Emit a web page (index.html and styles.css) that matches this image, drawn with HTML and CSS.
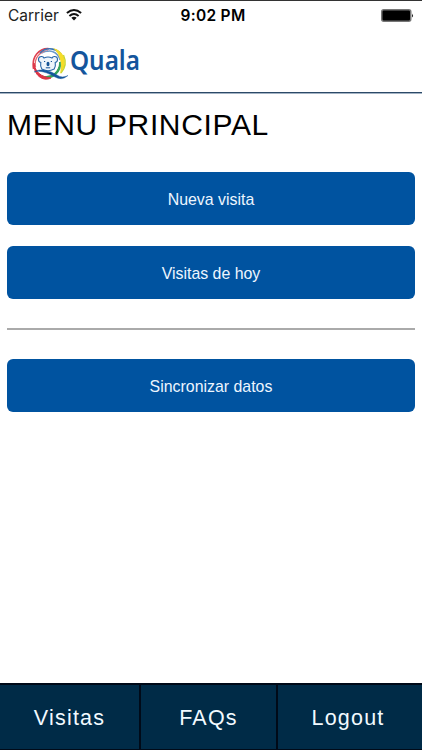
FILE: index.html
```html
<!DOCTYPE html>
<html lang="es">
<head>
<meta charset="utf-8">
<title>Quala</title>
<link rel="stylesheet" href="styles.css">
</head>
<body>
<div class="status">
  <div class="carrier"><span>Carrier</span>
    <svg width="16" height="12" viewBox="0 0 16 12" fill="none" stroke="#111" stroke-width="2"><path d="M.9 4.1Q8-2 15.1 4.1M3.4 6.9Q8 3 12.6 6.9"/><path d="M5.3 8.8Q8 6.6 10.7 8.8L8 11.6Z" fill="#111" stroke="none"/></svg>
  </div>
  <span class="time">9:02 PM</span>
  <svg class="battery" width="33" height="13" viewBox="0 0 33 13"><rect x=".75" y=".75" width="29" height="11.5" rx="2" fill="#000" stroke="#777" stroke-width="1.5"/><path d="M31 4.5q1.8 2 0 4z" fill="#111"/></svg>
</div>
<header class="header">
  <svg class="mark" width="38" height="34" viewBox="0 0 38 34" fill="none">
    <path d="M1.6 22C-.8 10 7 1 17 1.7" stroke="#df4050" stroke-width="1.6"/>
    <path d="M3.5 20C1.8 11 8 4 16 4" stroke="#e36a70" stroke-width="1.3"/>
    <path d="M8 6C15-1 27 1 31 11" stroke="#3975b5" stroke-width="1.6"/>
    <path d="M10 7C17 1 26 5 28 13" stroke="#6d9aca" stroke-width="1.4"/>
    <path d="M21 1C33 4 37 17 28 27C30 17 29 8 21 1Z" fill="#f6dc28"/>
    <path d="M31.5 8Q36 18 29 26" stroke="#c9d52e" stroke-width="1.3"/>
    <path d="M27.5 15C29 25 20 33 9 29.5" stroke="#35a35b" stroke-width="2.6"/>
    <path d="M2 16C3 25 9 30 19 31C11 35 1 28 2 16Z" fill="#dd3345" stroke="#dd3345"/>
    <circle cx="16" cy="16" r="11" fill="#fff"/>
    <path d="M9.8 22C8 19 8.5 17 8.8 15.5C5.3 14.7 5.8 8.8 10 9.5Q11.4 9.7 12 11Q16 9 20 11Q20.6 9.7 22 9.5C26.2 8.8 26.7 14.7 23.2 15.5C23.5 17 24 19 22.2 22Q16 25.5 9.8 22Z" fill="#edf4fb" stroke="#2866a8" stroke-width="1.1"/>
    <ellipse cx="16" cy="17" rx="1.5" ry="2.2" fill="#145396"/>
    <path d="M12 14.5h1.2M18.8 14.5h1.2M13.8 20.8h4.4" stroke="#145396" stroke-width="1"/>
    <path d="M2 25C9 20.5 19 24 25 28Q30 31.5 36 28.5Q30 34 23 30C15 25.5 8 23 2 25Z" fill="#14559c" stroke="#14559c" stroke-width=".4"/>
  </svg>
  <span class="brand">Quala</span>
</header>
<main class="main">
  <h1><span>MENU PRINCIPAL</span></h1>
  <button class="btn">Nueva visita</button>
  <button class="btn">Visitas de hoy</button>
  <hr>
  <button class="btn">Sincronizar datos</button>
</main>
<nav class="nav"><a>Visitas</a><a>FAQs</a><a>Logout</a></nav>
</body>
</html>
```
FILE: styles.css
```css
* { box-sizing: border-box; }
body {
  margin: 0;
  height: 750px;
  overflow: hidden;
  display: flex;
  flex-direction: column;
  background: #fff;
  color: #000;
  font-family: "Liberation Sans", Arial, sans-serif;
}
.status {
  height: 30px;
  border-top: 1px solid #333;
  padding: 0 8px;
  display: grid;
  grid-template-columns: 1fr auto 1fr;
  align-items: center;
  font-family: Inter, sans-serif;
  font-size: 15.5px;
  line-height: 28px;
}
.carrier { display: flex; align-items: center; gap: 7px; color: #222; }
.carrier svg { margin-top: -2px; }
.time { font-weight: 600; font-size: 15.5px; letter-spacing: .3px; padding-left: 4px; }
.battery { justify-self: end; margin-top: -1px; }
.header {
  height: 63px;
  border-bottom: 1px solid #2c4a68;
  box-shadow: 0 1px #a3b3c4;
  padding: 17px 0 0 32px;
  display: flex;
  align-items: flex-start;
}
.brand {
  font-family: "Noto Sans", sans-serif;
  font-weight: 600;
  font-size: 27px;
  line-height: 30px;
  margin-top: -2px;
  color: #14559c;
  transform: scaleX(.9);
  transform-origin: left;
}
.main { flex: 1; padding: 0 7px; }
h1 {
  margin: 0;
  height: 79px;
  padding-top: 14px;
  font-weight: 400;
  font-size: 30px;
  line-height: 36px;
  letter-spacing: .65px;
}
.btn {
  display: block;
  width: 100%;
  height: 53px;
  margin: 0 0 21px;
  padding: 2px 0 0;
  border: 0;
  border-radius: 6px;
  background: #0053a0;
  color: #edf6ff;
  font: 15.9px "Liberation Sans", Arial, sans-serif;
}
hr {
  height: 2px;
  margin: 29px 0;
  border: 0;
  background: #aaa;
}
.nav {
  height: 67px;
  display: grid;
  grid-template-columns: 141px 137px 1fr;
  border-top: 2px solid #000a18;
  border-bottom: 1px solid #000a18;
  background: #002b47;
  color: #f2faff;
  font-size: 21.5px;
  letter-spacing: 1.2px;
}
.nav a { display: flex; align-items: center; justify-content: center; padding-top: 2px; }
.nav a:not(:last-child) { border-right: 2px solid #000a18; }
.nav a:last-child { padding-right: 4px; }
```
